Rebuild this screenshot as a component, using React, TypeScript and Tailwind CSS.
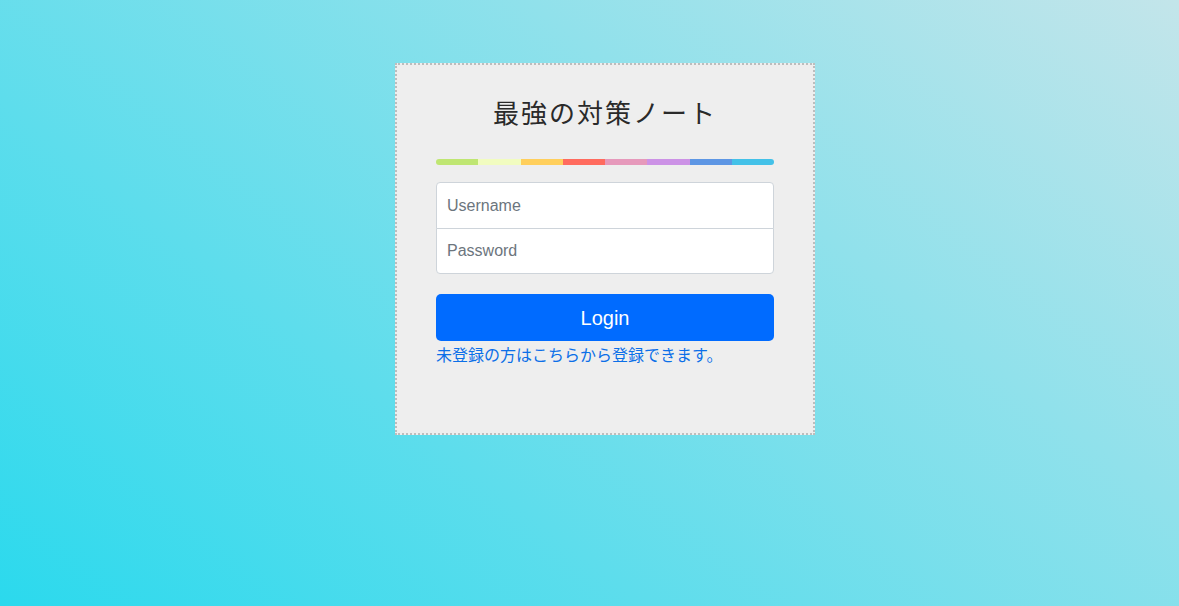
const colors = [
  "bg-[#bfe672]",
  "bg-[#f1fcc0]",
  "bg-[#ffcf5c]",
  "bg-[#ff6b5e]",
  "bg-[#e699bb]",
  "bg-[#cc92e6]",
  "bg-[#5d96e4]",
  "bg-[#43c1e8]",
];

export default function App() {
  return (
    <div className="min-h-screen w-full bg-[linear-gradient(38deg,#2bd9ed,#c3e5ea)] flex justify-center pl-[31px] pt-[63px] font-['Liberation_Sans','Noto_Sans_CJK_JP',sans-serif]">
      <div className="w-[420px] h-[372px] bg-[#eeeeee] border-2 border-dotted border-[#bdbdbd] px-[39px] pt-[28px]">
        <h1 className="text-center text-[26px] leading-[38px] text-[#2a2a2a] font-['Noto_Sans_CJK_JP',sans-serif] font-normal tracking-[2px]">
          最強の対策ノート
        </h1>
        <div className="mt-[28px] flex h-[6px] rounded-full overflow-hidden">
          {colors.map((c) => (
            <div key={c} className={"flex-1 " + c} />
          ))}
        </div>
        <div className="mt-[17px] flex flex-col">
          <input
            type="text"
            placeholder="Username"
            className="h-[47px] w-full bg-white border border-[#ced4da] rounded-t-[4px] px-[10px] text-[16px] text-[#495057] placeholder:text-[#6c757d] outline-none"
          />
          <input
            type="password"
            placeholder="Password"
            className="h-[46px] -mt-px w-full bg-white border border-[#ced4da] rounded-b-[4px] px-[10px] text-[16px] text-[#495057] placeholder:text-[#6c757d] outline-none"
          />
        </div>
        <button className="mt-[20px] w-full h-[47px] bg-[#006bff] text-white text-[20px] rounded-[5px]">
          Login
        </button>
        <a className="block text-[16px] leading-[26px] text-[#0b6fe8] font-['Noto_Sans_CJK_JP',sans-serif]">
          未登録の方はこちらから登録できます。
        </a>
      </div>
    </div>
  );
}
